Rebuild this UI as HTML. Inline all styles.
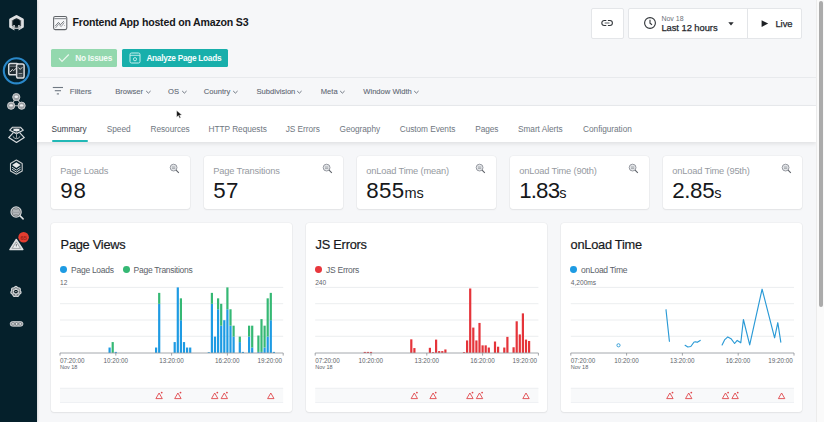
<!DOCTYPE html>
<html><head><meta charset="utf-8"><style>
html,body{margin:0;padding:0;width:824px;height:422px;overflow:hidden;background:#f6f7f9;font-family:"Liberation Sans", sans-serif;}
.t{position:absolute;white-space:nowrap;line-height:1;}
#sb{position:absolute;left:0;top:0;width:37px;height:422px;background:#05202b;box-shadow:1px 0 2px rgba(0,0,0,0.12);z-index:0}
#tabs{position:absolute;left:37px;top:106px;width:779px;height:36px;background:#fff;box-shadow:0 1.5px 4px rgba(0,0,0,0.09);}
.btn{position:absolute;border-radius:1.5px;}
.box{position:absolute;box-sizing:border-box;background:#fff;border:1px solid #e4e6e9;border-radius:2px;}
.card{position:absolute;background:#fff;border-radius:3px;box-shadow:0 0 0 0.6px rgba(0,0,0,0.05),0 1px 2px rgba(0,0,0,0.06);}
#scr{position:absolute;left:816px;top:0;width:8px;height:422px;background:#fafafa;border-left:1px solid #ececec;box-sizing:border-box;}
#thumb{position:absolute;left:818.5px;top:1px;width:4.6px;height:306px;background:#ababab;border-radius:2.3px;}
</style></head><body>
<div id="sb"></div><svg style="position:absolute;left:0;top:0" width="37" height="422"><path d="M16.50 16.30 L22.48 19.75 L22.48 26.65 L16.50 30.10 L10.52 26.65 L10.52 19.75Z" fill="#4b5357" stroke="#dfe1e3" stroke-width="2.7" stroke-linejoin="round"/><rect x="14.4" y="28.6" width="4.2" height="3.4" fill="#05202b"/><rect x="13.1" y="19.2" width="6.8" height="7.4" rx="2.4" fill="#03141c"/><circle cx="14.1" cy="25.9" r="0.85" fill="#eceeef"/><circle cx="18.9" cy="25.9" r="0.85" fill="#eceeef"/><path d="M12.0 27.6 Q16.5 29.4 21.0 27.6" fill="none" stroke="#b4b8bb" stroke-width="1.2"/><circle cx="16.4" cy="70.8" r="12.6" fill="none" stroke="#2a88c9" stroke-width="2.1"/><rect x="8.7" y="63.5" width="9.8" height="11.2" rx="1.8" fill="#1f2b31" stroke="#d9dcdf" stroke-width="1.5"/><line x1="9.5" y1="66.2" x2="17.5" y2="66.2" stroke="#9da2a6" stroke-width="0.7"/><path d="M10.2 72 L12.3 69.5 L13.6 70.6 L16 68.4" fill="none" stroke="#e8eaeb" stroke-width="0.9"/><rect x="16.6" y="63.9" width="7.5" height="14.2" rx="1.8" fill="#2c393f" stroke="#d9dcdf" stroke-width="1.5"/><path d="M18.4 67.5 L20.2 69.4 L22.4 67.2" fill="none" stroke="#e8eaeb" stroke-width="0.9"/><line x1="18.5" y1="73.6" x2="22.3" y2="73.6" stroke="#b8bcbf" stroke-width="0.8"/><line x1="18.5" y1="76" x2="22.3" y2="76" stroke="#8d9296" stroke-width="0.6"/><path d="M16.3 97.1 L11.1 105.7 L21.6 105.7Z" fill="none" stroke="#aeb2b5" stroke-width="1.1"/><circle cx="16.3" cy="97.1" r="3.6" fill="#9a9ea2" stroke="#c9ccce" stroke-width="1"/><ellipse cx="16.3" cy="96.8" rx="1.8" ry="1.2" fill="#eceeef"/><circle cx="11.1" cy="105.7" r="3.6" fill="#9a9ea2" stroke="#c9ccce" stroke-width="1"/><ellipse cx="11.1" cy="105.4" rx="1.8" ry="1.2" fill="#eceeef"/><circle cx="21.6" cy="105.7" r="3.6" fill="#9a9ea2" stroke="#c9ccce" stroke-width="1"/><ellipse cx="21.6" cy="105.4" rx="1.8" ry="1.2" fill="#eceeef"/><path d="M15 101.3 L16.3 103.6 L17.6 101.3" fill="#05202b" stroke="#05202b" stroke-width="0.8"/><path d="M12.4 127.4 H20.6 L23.2 130.2 L16.5 133.6 L9.8 130.2Z" fill="none" stroke="#d9dcdf" stroke-width="1.2" stroke-linejoin="round"/><rect x="12.6" y="127.2" width="7.8" height="1.3" fill="#9a9ea1"/><ellipse cx="16.5" cy="130.1" rx="3.3" ry="1.3" fill="#eef0f1"/><path d="M13.4 132.6 L8.7 137.6 L16.5 142.4 L24.3 137.6 L19.6 132.6" fill="none" stroke="#d9dcdf" stroke-width="1.2" stroke-linejoin="round"/><path d="M12.8 136.4 Q16.5 141 20.2 136.4" fill="none" stroke="#c9ccce" stroke-width="0.9"/><line x1="16.5" y1="131.5" x2="16.5" y2="137.8" stroke="#a9aeb1" stroke-width="0.9"/><path d="M16.35 160.1 L22.2 163.5 V170.9 L16.35 174.3 L10.5 170.9 V163.5Z" fill="none" stroke="#c9ccce" stroke-width="1.1" stroke-linejoin="round"/><path d="M16.35 162.3 L20.6 165.1 L16.35 167.9 L12.1 165.1Z" fill="#e6e8e9"/><path d="M12.1 167.2 L16.35 170 L20.6 167.2" fill="none" stroke="#d9dcdf" stroke-width="1"/><path d="M12.1 169.3 L16.35 172.1 L20.6 169.3" fill="none" stroke="#d9dcdf" stroke-width="1"/><line x1="19.8" y1="215.6" x2="23.1" y2="218.9" stroke="#e3e5e7" stroke-width="1.5" stroke-linecap="round"/><circle cx="16.1" cy="212" r="5.1" fill="#5b6266" stroke="#d3d6d8" stroke-width="1.2"/><circle cx="16.1" cy="212" r="3.5" fill="#8c9195" stroke="#c3c6c8" stroke-width="0.7"/><line x1="13.4" y1="211" x2="18.8" y2="211" stroke="#e6e8e9" stroke-width="0.8"/><line x1="13.4" y1="213.2" x2="18.8" y2="213.2" stroke="#d6d8da" stroke-width="0.8"/><path d="M16.3 239.4 L9.9 249.6 H22.9Z" fill="#c6c9cb" stroke="#e0e2e4" stroke-width="1.4" stroke-linejoin="round"/><path d="M16.3 242 L12.3 248.3 H20.3Z" fill="#eef0f1" stroke="#6d7377" stroke-width="0.5"/><line x1="16.3" y1="244" x2="16.3" y2="246.5" stroke="#3b4348" stroke-width="0.7"/><circle cx="23.6" cy="237.3" r="5.3" fill="#e43d30"/><text x="23.6" y="239.5" font-family="Liberation Sans" font-size="6" font-weight="bold" fill="#9c2219" text-anchor="middle">65</text><path d="M17.82 287.73 Q21.11 287.48 20.14 290.64 Q22.38 293.07 19.31 294.28 Q18.81 297.55 15.95 295.90 Q13.09 297.55 12.59 294.28 Q9.52 293.07 11.76 290.64 Q10.79 287.48 14.08 287.73 Q15.95 285.00 17.82 287.73Z" fill="#7d8387" stroke="#dadcde" stroke-width="1.1" stroke-linejoin="round"/><polygon points="15.95,288.00 17.15,289.52 19.07,289.80 18.35,291.60 19.07,293.40 17.15,293.68 15.95,295.20 14.75,293.68 12.83,293.40 13.55,291.60 12.83,289.80 14.75,289.52" fill="#e9ebec"/><circle cx="15.95" cy="291.6" r="1.9" fill="#06161d"/><circle cx="15.95" cy="291.6" r="0.7" fill="#f2f3f4"/><rect x="10.2" y="321.6" width="12.8" height="4.6" rx="2.3" fill="#aeb2b5" stroke="#d3d6d8" stroke-width="0.8"/><circle cx="13" cy="323.9" r="1.3" fill="#f1f2f3" stroke="#0e1d24" stroke-width="0.4"/><circle cx="16.6" cy="323.9" r="1.3" fill="#f1f2f3" stroke="#0e1d24" stroke-width="0.4"/><circle cx="20.2" cy="323.9" r="1.3" fill="#f1f2f3" stroke="#0e1d24" stroke-width="0.4"/></svg><svg style="position:absolute;left:50px;top:13px" width="20" height="20" viewBox="0 0 20 20">
<rect x="3.6" y="3.4" width="13.2" height="13.2" rx="1.6" fill="none" stroke="#606469" stroke-width="1.05"/>
<line x1="4.2" y1="5.6" x2="16.2" y2="5.6" stroke="#909499" stroke-width="1.2"/>
<path d="M5.2 13.2 L8.5 9.4 L10.6 11.6 L13.8 8.2" fill="none" stroke="#5a5e64" stroke-width="0.85"/>
<path d="M5.4 15 L8.7 11.2 L11.2 13.6 L14.2 9.6" fill="none" stroke="#7a7e84" stroke-width="0.75"/>
<circle cx="14.4" cy="12.6" r="0.45" fill="#6a6e74"/>
</svg><div class="t" style="left:72.5px;top:17.33px;font-size:10.6px;color:#17191c;font-weight:bold;letter-spacing:-0.2px;">Frontend App hosted on Amazon S3</div><div class="btn" style="left:51px;top:48.6px;width:66px;height:18.3px;background:#93d8ae"></div><svg style="position:absolute;left:58px;top:53px" width="12" height="10" viewBox="0 0 12 10"><path d="M1 5.2 L4 8.3 L10.8 1.5" fill="none" stroke="#e9f7ee" stroke-width="1.2"/></svg><div class="t" style="left:75.3px;top:53.87px;font-size:8.3px;color:#f3fbf6;font-weight:bold;letter-spacing:-0.28px;">No Issues</div><div class="btn" style="left:122px;top:48.8px;width:106px;height:18px;background:#18afab"></div><svg style="position:absolute;left:128.5px;top:51.8px" width="12" height="12" viewBox="0 0 12 12">
<rect x="1" y="1" width="10" height="10" rx="1.5" fill="none" stroke="#c8f0ee" stroke-width="1"/>
<line x1="1" y1="3.3" x2="11" y2="3.3" stroke="#c8f0ee" stroke-width="0.9"/>
<circle cx="6" cy="7.2" r="1.6" fill="none" stroke="#c8f0ee" stroke-width="0.9"/></svg><div class="t" style="left:146.4px;top:53.87px;font-size:8.3px;color:#f5fdfd;font-weight:bold;letter-spacing:-0.3px;">Analyze Page Loads</div><div class="box" style="left:590.5px;top:7.6px;width:33px;height:31px"></div><svg style="position:absolute;left:600px;top:18px" width="14" height="10" viewBox="0 0 14 10">
<path d="M6.3 2.5 H4.3 A2.5 2.5 0 0 0 4.3 7.5 H6.3 M7.9 2.5 H9.9 A2.5 2.5 0 0 1 9.9 7.5 H7.9" fill="none" stroke="#2f3338" stroke-width="1.05"/><path d="M5.1 5 H9.1" stroke="#3a3e44" stroke-width="0.85" stroke-linecap="round"/></svg><div class="box" style="left:628.2px;top:7.6px;width:174.3px;height:31px"></div><div style="position:absolute;left:747px;top:8px;width:1px;height:30px;background:#e3e5e8"></div><svg style="position:absolute;left:643px;top:16px" width="14" height="14" viewBox="0 0 14 14">
<circle cx="7" cy="7" r="5.4" fill="none" stroke="#2f3338" stroke-width="1.1"/>
<path d="M7 3.8 V7.2 L9 8.8" fill="none" stroke="#2f3338" stroke-width="1.1"/></svg><div class="t" style="left:661.4px;top:15.27px;font-size:7px;color:#6b7079;font-weight:normal;letter-spacing:0px;">Nov 18</div><div class="t" style="left:661.4px;top:23.34px;font-size:9.4px;color:#25282d;font-weight:normal;letter-spacing:-0.05px;-webkit-text-stroke:0.25px #25282d;">Last 12 hours</div><svg style="position:absolute;left:728px;top:21.5px" width="6" height="4" viewBox="0 0 6 4"><path d="M0.3 0.3 H5.7 L3 3.5Z" fill="#2a2d31"/></svg><svg style="position:absolute;left:760.5px;top:19.5px" width="8" height="8" viewBox="0 0 8 8"><path d="M0.6 0.3 L7.2 3.6 L0.6 6.9Z" fill="#1d2024"/></svg><div class="t" style="left:775.4px;top:18.74px;font-size:9.4px;color:#25282d;font-weight:normal;letter-spacing:0px;-webkit-text-stroke:0.25px #25282d;">Live</div><div style="position:absolute;left:37px;top:77px;width:779px;height:1px;background:#e8eaed"></div><div style="position:absolute;left:37px;top:105px;width:779px;height:1px;background:#e8eaed"></div><svg style="position:absolute;left:52px;top:86px" width="12" height="10" viewBox="0 0 12 10">
<line x1="0.8" y1="1.5" x2="11" y2="1.5" stroke="#6f7883" stroke-width="1.1"/>
<line x1="2.8" y1="4.7" x2="9" y2="4.7" stroke="#6f7883" stroke-width="1.1"/>
<line x1="4.8" y1="7.9" x2="7" y2="7.9" stroke="#6f7883" stroke-width="1.1"/></svg><div class="t" style="left:69.8px;top:87.63px;font-size:8px;color:#6b737d;font-weight:normal;letter-spacing:0px;-webkit-text-stroke:0.15px #6b737d;">Filters</div><div class="t" style="left:115.2px;top:87.87px;font-size:7.6px;color:#5f6874;font-weight:normal;letter-spacing:0px;-webkit-text-stroke:0.1px #5f6874;">Browser</div><svg style="position:absolute;left:144.5px;top:90px" width="7" height="5" viewBox="0 0 7 5"><path d="M1.2 1 L3.4 3.1 L5.6 1" fill="none" stroke="#5f6874" stroke-width="0.9"/></svg><div class="t" style="left:168px;top:87.87px;font-size:7.6px;color:#5f6874;font-weight:normal;letter-spacing:0px;-webkit-text-stroke:0.1px #5f6874;">OS</div><svg style="position:absolute;left:180.5px;top:90px" width="7" height="5" viewBox="0 0 7 5"><path d="M1.2 1 L3.4 3.1 L5.6 1" fill="none" stroke="#5f6874" stroke-width="0.9"/></svg><div class="t" style="left:203.8px;top:87.87px;font-size:7.6px;color:#5f6874;font-weight:normal;letter-spacing:0px;-webkit-text-stroke:0.1px #5f6874;">Country</div><svg style="position:absolute;left:232px;top:90px" width="7" height="5" viewBox="0 0 7 5"><path d="M1.2 1 L3.4 3.1 L5.6 1" fill="none" stroke="#5f6874" stroke-width="0.9"/></svg><div class="t" style="left:256.5px;top:87.87px;font-size:7.6px;color:#5f6874;font-weight:normal;letter-spacing:0px;-webkit-text-stroke:0.1px #5f6874;">Subdivision</div><svg style="position:absolute;left:296px;top:90px" width="7" height="5" viewBox="0 0 7 5"><path d="M1.2 1 L3.4 3.1 L5.6 1" fill="none" stroke="#5f6874" stroke-width="0.9"/></svg><div class="t" style="left:320.8px;top:87.87px;font-size:7.6px;color:#5f6874;font-weight:normal;letter-spacing:0px;-webkit-text-stroke:0.1px #5f6874;">Meta</div><svg style="position:absolute;left:338.5px;top:90px" width="7" height="5" viewBox="0 0 7 5"><path d="M1.2 1 L3.4 3.1 L5.6 1" fill="none" stroke="#5f6874" stroke-width="0.9"/></svg><div class="t" style="left:363.3px;top:87.87px;font-size:7.6px;color:#5f6874;font-weight:normal;letter-spacing:0px;-webkit-text-stroke:0.1px #5f6874;">Window Width</div><svg style="position:absolute;left:413px;top:90px" width="7" height="5" viewBox="0 0 7 5"><path d="M1.2 1 L3.4 3.1 L5.6 1" fill="none" stroke="#5f6874" stroke-width="0.9"/></svg><div id="tabs"></div><div class="t" style="left:51.5px;top:124.82px;font-size:8.3px;color:#3c434c;font-weight:normal;letter-spacing:-0.05px;">Summary</div><div class="t" style="left:106.8px;top:124.82px;font-size:8.3px;color:#6f7781;font-weight:normal;letter-spacing:-0.05px;">Speed</div><div class="t" style="left:150.5px;top:124.82px;font-size:8.3px;color:#6f7781;font-weight:normal;letter-spacing:-0.05px;">Resources</div><div class="t" style="left:208.6px;top:124.82px;font-size:8.3px;color:#6f7781;font-weight:normal;letter-spacing:-0.05px;">HTTP Requests</div><div class="t" style="left:285.7px;top:124.82px;font-size:8.3px;color:#6f7781;font-weight:normal;letter-spacing:-0.05px;">JS Errors</div><div class="t" style="left:339.5px;top:124.82px;font-size:8.3px;color:#6f7781;font-weight:normal;letter-spacing:-0.05px;">Geography</div><div class="t" style="left:399.7px;top:124.82px;font-size:8.3px;color:#6f7781;font-weight:normal;letter-spacing:-0.05px;">Custom Events</div><div class="t" style="left:475.2px;top:124.82px;font-size:8.3px;color:#6f7781;font-weight:normal;letter-spacing:-0.05px;">Pages</div><div class="t" style="left:518px;top:124.82px;font-size:8.3px;color:#6f7781;font-weight:normal;letter-spacing:-0.05px;">Smart Alerts</div><div class="t" style="left:583.1px;top:124.82px;font-size:8.3px;color:#6f7781;font-weight:normal;letter-spacing:-0.05px;">Configuration</div><div style="position:absolute;left:51.5px;top:140.3px;width:36px;height:2px;background:#22b8b6;border-radius:1px"></div><svg style="position:absolute;left:176.4px;top:109.6px" width="6.8" height="9.35" viewBox="0 0 8 11"><path d="M0.8 0.5 L0.8 8.5 L2.8 6.6 L4.3 9.8 L5.6 9.2 L4.2 6.1 L6.9 6.0Z" fill="#111" stroke="#fff" stroke-width="0.5"/></svg><div class="card" style="left:51px;top:156px;width:139.3px;height:53px"></div><div class="t" style="left:60.3px;top:166.53px;font-size:9.3px;color:#969aa1;font-weight:normal;letter-spacing:-0.18px;">Page Loads</div><div class="t" style="left:60.2px;top:180.12px;font-size:22.3px;color:#16181b;font-weight:normal;letter-spacing:0.9px;">98</div><svg style="position:absolute;left:169.2px;top:162.9px" width="11" height="11" viewBox="0 0 11 11">
<circle cx="4.6" cy="4.6" r="3.4" fill="#e4e6e9" stroke="#8d9198" stroke-width="0.9"/>
<line x1="3" y1="4" x2="6.2" y2="4" stroke="#8d9198" stroke-width="0.7"/>
<line x1="3" y1="5.4" x2="6.2" y2="5.4" stroke="#8d9198" stroke-width="0.7"/>
<line x1="7.1" y1="7.1" x2="9.8" y2="9.8" stroke="#5d6168" stroke-width="1.1"/></svg><div class="card" style="left:204px;top:156px;width:139.3px;height:53px"></div><div class="t" style="left:213.3px;top:166.53px;font-size:9.3px;color:#969aa1;font-weight:normal;letter-spacing:-0.18px;">Page Transitions</div><div class="t" style="left:213.2px;top:180.12px;font-size:22.3px;color:#16181b;font-weight:normal;letter-spacing:0.4px;">57</div><svg style="position:absolute;left:322.2px;top:162.9px" width="11" height="11" viewBox="0 0 11 11">
<circle cx="4.6" cy="4.6" r="3.4" fill="#e4e6e9" stroke="#8d9198" stroke-width="0.9"/>
<line x1="3" y1="4" x2="6.2" y2="4" stroke="#8d9198" stroke-width="0.7"/>
<line x1="3" y1="5.4" x2="6.2" y2="5.4" stroke="#8d9198" stroke-width="0.7"/>
<line x1="7.1" y1="7.1" x2="9.8" y2="9.8" stroke="#5d6168" stroke-width="1.1"/></svg><div class="card" style="left:357px;top:156px;width:139.3px;height:53px"></div><div class="t" style="left:366.3px;top:166.53px;font-size:9.3px;color:#969aa1;font-weight:normal;letter-spacing:-0.18px;">onLoad Time (mean)</div><div class="t" style="left:366.2px;top:180.12px;font-size:22.3px;color:#16181b;font-weight:normal;letter-spacing:0.35px;">855<span style="font-size:14.5px;letter-spacing:0">ms</span></div><svg style="position:absolute;left:475.2px;top:162.9px" width="11" height="11" viewBox="0 0 11 11">
<circle cx="4.6" cy="4.6" r="3.4" fill="#e4e6e9" stroke="#8d9198" stroke-width="0.9"/>
<line x1="3" y1="4" x2="6.2" y2="4" stroke="#8d9198" stroke-width="0.7"/>
<line x1="3" y1="5.4" x2="6.2" y2="5.4" stroke="#8d9198" stroke-width="0.7"/>
<line x1="7.1" y1="7.1" x2="9.8" y2="9.8" stroke="#5d6168" stroke-width="1.1"/></svg><div class="card" style="left:510px;top:156px;width:139.3px;height:53px"></div><div class="t" style="left:519.3px;top:166.53px;font-size:9.3px;color:#969aa1;font-weight:normal;letter-spacing:-0.18px;">onLoad Time (90th)</div><div class="t" style="left:519.2px;top:180.12px;font-size:22.3px;color:#16181b;font-weight:normal;letter-spacing:-0.85px;">1.83<span style="font-size:14.5px;letter-spacing:0">s</span></div><svg style="position:absolute;left:628.2px;top:162.9px" width="11" height="11" viewBox="0 0 11 11">
<circle cx="4.6" cy="4.6" r="3.4" fill="#e4e6e9" stroke="#8d9198" stroke-width="0.9"/>
<line x1="3" y1="4" x2="6.2" y2="4" stroke="#8d9198" stroke-width="0.7"/>
<line x1="3" y1="5.4" x2="6.2" y2="5.4" stroke="#8d9198" stroke-width="0.7"/>
<line x1="7.1" y1="7.1" x2="9.8" y2="9.8" stroke="#5d6168" stroke-width="1.1"/></svg><div class="card" style="left:663px;top:156px;width:139.3px;height:53px"></div><div class="t" style="left:672.3px;top:166.53px;font-size:9.3px;color:#969aa1;font-weight:normal;letter-spacing:-0.18px;">onLoad Time (95th)</div><div class="t" style="left:672.2px;top:180.12px;font-size:22.3px;color:#16181b;font-weight:normal;letter-spacing:-0.35px;">2.85<span style="font-size:14.5px;letter-spacing:0">s</span></div><svg style="position:absolute;left:781.2px;top:162.9px" width="11" height="11" viewBox="0 0 11 11">
<circle cx="4.6" cy="4.6" r="3.4" fill="#e4e6e9" stroke="#8d9198" stroke-width="0.9"/>
<line x1="3" y1="4" x2="6.2" y2="4" stroke="#8d9198" stroke-width="0.7"/>
<line x1="3" y1="5.4" x2="6.2" y2="5.4" stroke="#8d9198" stroke-width="0.7"/>
<line x1="7.1" y1="7.1" x2="9.8" y2="9.8" stroke="#5d6168" stroke-width="1.1"/></svg><div class="card" style="left:51px;top:223px;width:241px;height:189px"></div><div class="t" style="left:60.6px;top:239.26px;font-size:12.8px;color:#17191c;letter-spacing:-0.25px;-webkit-text-stroke:0.2px #17191c">Page Views</div><div style="position:absolute;left:60.3px;top:266.4px;width:6.9px;height:6.9px;border-radius:50%;background:#1e9be3"></div><div class="t" style="left:71.1px;top:266.40px;font-size:8.5px;color:#5b6168;letter-spacing:-0.28px">Page Loads</div><div style="position:absolute;left:122.8px;top:266.4px;width:6.9px;height:6.9px;border-radius:50%;background:#35b874"></div><div class="t" style="left:133.6px;top:266.40px;font-size:8.5px;color:#5b6168;letter-spacing:-0.28px">Page Transitions</div><div class="t" style="left:60.0px;top:279.51px;font-size:6.6px;color:#5f646a">12</div><svg style="position:absolute;left:0;top:0" width="824" height="422"><line x1="60.0" y1="287.4" x2="283.2" y2="287.4" stroke="#e6e8eb" stroke-width="0.8"/><line x1="60.0" y1="303.7" x2="283.2" y2="303.7" stroke="#e6e8eb" stroke-width="0.8"/><line x1="60.0" y1="320.0" x2="283.2" y2="320.0" stroke="#e6e8eb" stroke-width="0.8"/><line x1="60.0" y1="336.3" x2="283.2" y2="336.3" stroke="#e6e8eb" stroke-width="0.8"/><rect x="108.50" y="347.53" width="2.2" height="5.47" fill="#1e9be3"/><rect x="111.60" y="342.07" width="2.2" height="10.93" fill="#35b874"/><rect x="114.70" y="351.91" width="2.2" height="1.09" fill="#1e9be3"/><rect x="155.00" y="347.53" width="2.2" height="5.47" fill="#1e9be3"/><rect x="158.10" y="303.80" width="2.2" height="49.20" fill="#1e9be3"/><rect x="158.10" y="292.87" width="2.2" height="10.93" fill="#35b874"/><rect x="173.60" y="342.07" width="2.2" height="10.93" fill="#1e9be3"/><rect x="176.70" y="287.40" width="2.2" height="65.60" fill="#1e9be3"/><rect x="179.80" y="320.20" width="2.2" height="32.80" fill="#1e9be3"/><rect x="179.80" y="298.33" width="2.2" height="21.87" fill="#35b874"/><rect x="182.90" y="342.07" width="2.2" height="10.93" fill="#1e9be3"/><rect x="186.00" y="347.53" width="2.2" height="5.47" fill="#1e9be3"/><rect x="189.10" y="347.53" width="2.2" height="5.47" fill="#1e9be3"/><rect x="207.70" y="352.18" width="2.2" height="0.82" fill="#1e9be3"/><rect x="210.80" y="303.80" width="2.2" height="49.20" fill="#1e9be3"/><rect x="210.80" y="292.87" width="2.2" height="10.93" fill="#35b874"/><rect x="213.90" y="336.60" width="2.2" height="16.40" fill="#1e9be3"/><rect x="217.00" y="309.27" width="2.2" height="43.73" fill="#1e9be3"/><rect x="217.00" y="298.33" width="2.2" height="10.93" fill="#35b874"/><rect x="220.10" y="325.67" width="2.2" height="27.33" fill="#1e9be3"/><rect x="220.10" y="303.80" width="2.2" height="21.87" fill="#35b874"/><rect x="223.20" y="320.20" width="2.2" height="32.80" fill="#1e9be3"/><rect x="226.30" y="309.27" width="2.2" height="43.73" fill="#1e9be3"/><rect x="226.30" y="287.40" width="2.2" height="21.87" fill="#35b874"/><rect x="229.40" y="325.67" width="2.2" height="27.33" fill="#1e9be3"/><rect x="229.40" y="309.27" width="2.2" height="16.40" fill="#35b874"/><rect x="232.50" y="336.60" width="2.2" height="16.40" fill="#1e9be3"/><rect x="232.50" y="325.67" width="2.2" height="10.93" fill="#35b874"/><rect x="238.70" y="342.07" width="2.2" height="10.93" fill="#1e9be3"/><rect x="238.70" y="336.60" width="2.2" height="5.47" fill="#35b874"/><rect x="241.80" y="351.91" width="2.2" height="1.09" fill="#1e9be3"/><rect x="248.00" y="336.60" width="2.2" height="16.40" fill="#1e9be3"/><rect x="248.00" y="325.67" width="2.2" height="10.93" fill="#35b874"/><rect x="251.10" y="347.53" width="2.2" height="5.47" fill="#1e9be3"/><rect x="251.10" y="325.67" width="2.2" height="21.87" fill="#35b874"/><rect x="257.30" y="351.91" width="2.2" height="1.09" fill="#1e9be3"/><rect x="257.30" y="335.51" width="2.2" height="16.40" fill="#35b874"/><rect x="260.40" y="351.91" width="2.2" height="1.09" fill="#1e9be3"/><rect x="260.40" y="319.11" width="2.2" height="32.80" fill="#35b874"/><rect x="263.50" y="347.53" width="2.2" height="5.47" fill="#1e9be3"/><rect x="263.50" y="325.67" width="2.2" height="21.87" fill="#35b874"/><rect x="266.60" y="336.60" width="2.2" height="16.40" fill="#1e9be3"/><rect x="266.60" y="298.33" width="2.2" height="38.27" fill="#35b874"/><rect x="269.70" y="320.20" width="2.2" height="32.80" fill="#1e9be3"/><rect x="269.70" y="292.87" width="2.2" height="27.33" fill="#35b874"/><rect x="272.80" y="351.91" width="2.2" height="1.09" fill="#1e9be3"/><line x1="60.0" y1="353.0" x2="283.2" y2="353.0" stroke="#9a9ea4" stroke-width="0.9"/><line x1="60.00" y1="353.0" x2="60.00" y2="355.6" stroke="#8a8e94" stroke-width="0.8"/><line x1="115.80" y1="353.0" x2="115.80" y2="355.6" stroke="#8a8e94" stroke-width="0.8"/><line x1="171.60" y1="353.0" x2="171.60" y2="355.6" stroke="#8a8e94" stroke-width="0.8"/><line x1="227.40" y1="353.0" x2="227.40" y2="355.6" stroke="#8a8e94" stroke-width="0.8"/><line x1="283.20" y1="353.0" x2="283.20" y2="355.6" stroke="#8a8e94" stroke-width="0.8"/><rect x="60.0" y="388.3" width="223.2" height="14.2" fill="#f8f9fa"/><line x1="60.0" y1="388.3" x2="283.2" y2="388.3" stroke="#e9ebee" stroke-width="0.8"/><line x1="60.0" y1="402.5" x2="283.2" y2="402.5" stroke="#eceef1" stroke-width="0.8"/><path d="M155.90 398.6 L159.10 393 L162.30 398.6 Z" fill="none" stroke="#e0474c" stroke-width="0.9" stroke-linejoin="round"/><circle cx="161.70" cy="392.6" r="0.9" fill="#e0474c"/><path d="M174.70 398.6 L177.90 393 L181.10 398.6 Z" fill="none" stroke="#e0474c" stroke-width="0.9" stroke-linejoin="round"/><circle cx="180.50" cy="392.6" r="0.9" fill="#e0474c"/><path d="M211.50 398.6 L214.70 393 L217.90 398.6 Z" fill="none" stroke="#e0474c" stroke-width="0.9" stroke-linejoin="round"/><circle cx="217.30" cy="392.6" r="0.9" fill="#e0474c"/><path d="M221.10 398.6 L224.30 393 L227.50 398.6 Z" fill="none" stroke="#e0474c" stroke-width="0.9" stroke-linejoin="round"/><circle cx="226.90" cy="392.6" r="0.9" fill="#e0474c"/><path d="M267.60 398.6 L270.80 393 L274.00 398.6 Z" fill="none" stroke="#e0474c" stroke-width="0.9" stroke-linejoin="round"/></svg><div class="t" style="left:60.0px;top:358.07px;font-size:6.3px;color:#60656b">07:20:00</div><div class="t" style="left:103.40px;top:358.07px;font-size:6.3px;color:#60656b">10:20:00</div><div class="t" style="left:159.20px;top:358.07px;font-size:6.3px;color:#60656b">13:20:00</div><div class="t" style="left:215.00px;top:358.07px;font-size:6.3px;color:#60656b">16:20:00</div><div class="t" style="left:257.40px;top:358.07px;font-size:6.3px;color:#60656b">19:20:00</div><div class="t" style="left:60.0px;top:364.74px;font-size:5.5px;color:#60656b">Nov 18</div><div class="card" style="left:306px;top:223px;width:241px;height:189px"></div><div class="t" style="left:315.6px;top:239.26px;font-size:12.8px;color:#17191c;letter-spacing:-0.25px;-webkit-text-stroke:0.2px #17191c">JS Errors</div><div style="position:absolute;left:315.3px;top:266.4px;width:6.9px;height:6.9px;border-radius:50%;background:#e8373d"></div><div class="t" style="left:326.1px;top:266.40px;font-size:8.5px;color:#5b6168;letter-spacing:-0.28px">JS Errors</div><div class="t" style="left:315.2px;top:279.51px;font-size:6.6px;color:#5f646a">240</div><svg style="position:absolute;left:0;top:0" width="824" height="422"><line x1="315.2" y1="287.4" x2="538.4" y2="287.4" stroke="#e6e8eb" stroke-width="0.8"/><line x1="315.2" y1="303.7" x2="538.4" y2="303.7" stroke="#e6e8eb" stroke-width="0.8"/><line x1="315.2" y1="320.0" x2="538.4" y2="320.0" stroke="#e6e8eb" stroke-width="0.8"/><line x1="315.2" y1="336.3" x2="538.4" y2="336.3" stroke="#e6e8eb" stroke-width="0.8"/><rect x="363.70" y="351.91" width="2.2" height="1.09" fill="#e5343a"/><rect x="366.80" y="351.91" width="2.2" height="1.09" fill="#e5343a"/><rect x="369.90" y="351.91" width="2.2" height="1.09" fill="#e5343a"/><rect x="410.20" y="339.33" width="2.2" height="13.67" fill="#e5343a"/><rect x="413.30" y="348.08" width="2.2" height="4.92" fill="#e5343a"/><rect x="428.80" y="347.81" width="2.2" height="5.19" fill="#e5343a"/><rect x="431.90" y="352.18" width="2.2" height="0.82" fill="#e5343a"/><rect x="435.00" y="339.61" width="2.2" height="13.39" fill="#e5343a"/><rect x="438.10" y="351.09" width="2.2" height="1.91" fill="#e5343a"/><rect x="441.20" y="351.09" width="2.2" height="1.91" fill="#e5343a"/><rect x="444.30" y="349.45" width="2.2" height="3.55" fill="#e5343a"/><rect x="462.90" y="352.18" width="2.2" height="0.82" fill="#e5343a"/><rect x="466.00" y="340.43" width="2.2" height="12.57" fill="#e5343a"/><rect x="469.10" y="288.49" width="2.2" height="64.51" fill="#e5343a"/><rect x="472.20" y="327.58" width="2.2" height="25.42" fill="#e5343a"/><rect x="475.30" y="340.43" width="2.2" height="12.57" fill="#e5343a"/><rect x="478.40" y="322.93" width="2.2" height="30.07" fill="#e5343a"/><rect x="481.50" y="345.35" width="2.2" height="7.65" fill="#e5343a"/><rect x="484.60" y="345.35" width="2.2" height="7.65" fill="#e5343a"/><rect x="487.70" y="347.53" width="2.2" height="5.47" fill="#e5343a"/><rect x="493.90" y="341.52" width="2.2" height="11.48" fill="#e5343a"/><rect x="497.00" y="346.71" width="2.2" height="6.29" fill="#e5343a"/><rect x="503.20" y="347.53" width="2.2" height="5.47" fill="#e5343a"/><rect x="506.30" y="336.87" width="2.2" height="16.13" fill="#e5343a"/><rect x="512.50" y="347.26" width="2.2" height="5.74" fill="#e5343a"/><rect x="515.60" y="321.29" width="2.2" height="31.71" fill="#e5343a"/><rect x="518.70" y="334.41" width="2.2" height="18.59" fill="#e5343a"/><rect x="521.80" y="313.37" width="2.2" height="39.63" fill="#e5343a"/><rect x="524.90" y="339.61" width="2.2" height="13.39" fill="#e5343a"/><rect x="528.00" y="340.97" width="2.2" height="12.03" fill="#e5343a"/><line x1="315.2" y1="353.0" x2="538.4" y2="353.0" stroke="#9a9ea4" stroke-width="0.9"/><line x1="315.20" y1="353.0" x2="315.20" y2="355.6" stroke="#8a8e94" stroke-width="0.8"/><line x1="371.00" y1="353.0" x2="371.00" y2="355.6" stroke="#8a8e94" stroke-width="0.8"/><line x1="426.80" y1="353.0" x2="426.80" y2="355.6" stroke="#8a8e94" stroke-width="0.8"/><line x1="482.60" y1="353.0" x2="482.60" y2="355.6" stroke="#8a8e94" stroke-width="0.8"/><line x1="538.40" y1="353.0" x2="538.40" y2="355.6" stroke="#8a8e94" stroke-width="0.8"/><rect x="315.2" y="388.3" width="223.2" height="14.2" fill="#f8f9fa"/><line x1="315.2" y1="388.3" x2="538.4" y2="388.3" stroke="#e9ebee" stroke-width="0.8"/><line x1="315.2" y1="402.5" x2="538.4" y2="402.5" stroke="#eceef1" stroke-width="0.8"/><path d="M411.10 398.6 L414.30 393 L417.50 398.6 Z" fill="none" stroke="#e0474c" stroke-width="0.9" stroke-linejoin="round"/><circle cx="416.90" cy="392.6" r="0.9" fill="#e0474c"/><path d="M429.90 398.6 L433.10 393 L436.30 398.6 Z" fill="none" stroke="#e0474c" stroke-width="0.9" stroke-linejoin="round"/><circle cx="435.70" cy="392.6" r="0.9" fill="#e0474c"/><path d="M466.70 398.6 L469.90 393 L473.10 398.6 Z" fill="none" stroke="#e0474c" stroke-width="0.9" stroke-linejoin="round"/><circle cx="472.50" cy="392.6" r="0.9" fill="#e0474c"/><path d="M476.30 398.6 L479.50 393 L482.70 398.6 Z" fill="none" stroke="#e0474c" stroke-width="0.9" stroke-linejoin="round"/><circle cx="482.10" cy="392.6" r="0.9" fill="#e0474c"/><path d="M522.80 398.6 L526.00 393 L529.20 398.6 Z" fill="none" stroke="#e0474c" stroke-width="0.9" stroke-linejoin="round"/></svg><div class="t" style="left:315.2px;top:358.07px;font-size:6.3px;color:#60656b">07:20:00</div><div class="t" style="left:358.60px;top:358.07px;font-size:6.3px;color:#60656b">10:20:00</div><div class="t" style="left:414.40px;top:358.07px;font-size:6.3px;color:#60656b">13:20:00</div><div class="t" style="left:470.20px;top:358.07px;font-size:6.3px;color:#60656b">16:20:00</div><div class="t" style="left:512.60px;top:358.07px;font-size:6.3px;color:#60656b">19:20:00</div><div class="t" style="left:315.2px;top:364.74px;font-size:5.5px;color:#60656b">Nov 18</div><div class="card" style="left:561px;top:223px;width:241px;height:189px"></div><div class="t" style="left:570.6px;top:239.26px;font-size:12.8px;color:#17191c;letter-spacing:-0.25px;-webkit-text-stroke:0.2px #17191c">onLoad Time</div><div style="position:absolute;left:570.3px;top:266.4px;width:6.9px;height:6.9px;border-radius:50%;background:#1e9be3"></div><div class="t" style="left:581.0999999999999px;top:266.40px;font-size:8.5px;color:#5b6168;letter-spacing:-0.28px">onLoad Time</div><div class="t" style="left:570.8px;top:279.51px;font-size:6.6px;color:#5f646a">4,200ms</div><svg style="position:absolute;left:0;top:0" width="824" height="422"><line x1="570.8" y1="287.4" x2="794.0" y2="287.4" stroke="#e6e8eb" stroke-width="0.8"/><line x1="570.8" y1="303.7" x2="794.0" y2="303.7" stroke="#e6e8eb" stroke-width="0.8"/><line x1="570.8" y1="320.0" x2="794.0" y2="320.0" stroke="#e6e8eb" stroke-width="0.8"/><line x1="570.8" y1="336.3" x2="794.0" y2="336.3" stroke="#e6e8eb" stroke-width="0.8"/><polyline points="666,309.7 669.4,341.3" fill="none" stroke="#2a9ad6" stroke-width="1.15" stroke-linejoin="round" stroke-linecap="round"/><polyline points="685.1,345.3 687.8,347 690.8,346.5 694.1,342 695.7,341.9 697.3,342.3 700.2,340.4" fill="none" stroke="#2a9ad6" stroke-width="1.15" stroke-linejoin="round" stroke-linecap="round"/><polyline points="722.1,344.9 724.8,339.6 727.8,336.9 731,338.7 734.6,343.5 737.2,340.4 740.8,342.8 743.4,319.5 749.7,344.9 762.1,289.2 774.6,337.8 777.8,322.7 780.8,342.2" fill="none" stroke="#2a9ad6" stroke-width="1.15" stroke-linejoin="round" stroke-linecap="round"/><circle cx="618.5" cy="345.3" r="1.6" fill="none" stroke="#2a9ad6" stroke-width="0.9"/><line x1="570.8" y1="353.0" x2="794.0" y2="353.0" stroke="#9a9ea4" stroke-width="0.9"/><line x1="570.80" y1="353.0" x2="570.80" y2="355.6" stroke="#8a8e94" stroke-width="0.8"/><line x1="626.60" y1="353.0" x2="626.60" y2="355.6" stroke="#8a8e94" stroke-width="0.8"/><line x1="682.40" y1="353.0" x2="682.40" y2="355.6" stroke="#8a8e94" stroke-width="0.8"/><line x1="738.20" y1="353.0" x2="738.20" y2="355.6" stroke="#8a8e94" stroke-width="0.8"/><line x1="794.00" y1="353.0" x2="794.00" y2="355.6" stroke="#8a8e94" stroke-width="0.8"/><rect x="570.8" y="388.3" width="223.2" height="14.2" fill="#f8f9fa"/><line x1="570.8" y1="388.3" x2="794.0" y2="388.3" stroke="#e9ebee" stroke-width="0.8"/><line x1="570.8" y1="402.5" x2="794.0" y2="402.5" stroke="#eceef1" stroke-width="0.8"/><path d="M666.70 398.6 L669.90 393 L673.10 398.6 Z" fill="none" stroke="#e0474c" stroke-width="0.9" stroke-linejoin="round"/><circle cx="672.50" cy="392.6" r="0.9" fill="#e0474c"/><path d="M685.50 398.6 L688.70 393 L691.90 398.6 Z" fill="none" stroke="#e0474c" stroke-width="0.9" stroke-linejoin="round"/><circle cx="691.30" cy="392.6" r="0.9" fill="#e0474c"/><path d="M722.30 398.6 L725.50 393 L728.70 398.6 Z" fill="none" stroke="#e0474c" stroke-width="0.9" stroke-linejoin="round"/><circle cx="728.10" cy="392.6" r="0.9" fill="#e0474c"/><path d="M731.90 398.6 L735.10 393 L738.30 398.6 Z" fill="none" stroke="#e0474c" stroke-width="0.9" stroke-linejoin="round"/><circle cx="737.70" cy="392.6" r="0.9" fill="#e0474c"/><path d="M778.40 398.6 L781.60 393 L784.80 398.6 Z" fill="none" stroke="#e0474c" stroke-width="0.9" stroke-linejoin="round"/></svg><div class="t" style="left:570.8px;top:358.07px;font-size:6.3px;color:#60656b">07:20:00</div><div class="t" style="left:614.20px;top:358.07px;font-size:6.3px;color:#60656b">10:20:00</div><div class="t" style="left:670.00px;top:358.07px;font-size:6.3px;color:#60656b">13:20:00</div><div class="t" style="left:725.80px;top:358.07px;font-size:6.3px;color:#60656b">16:20:00</div><div class="t" style="left:768.20px;top:358.07px;font-size:6.3px;color:#60656b">19:20:00</div><div class="t" style="left:570.8px;top:364.74px;font-size:5.5px;color:#60656b">Nov 18</div>
<div id="scr"></div><div id="thumb"></div>
</body></html>
